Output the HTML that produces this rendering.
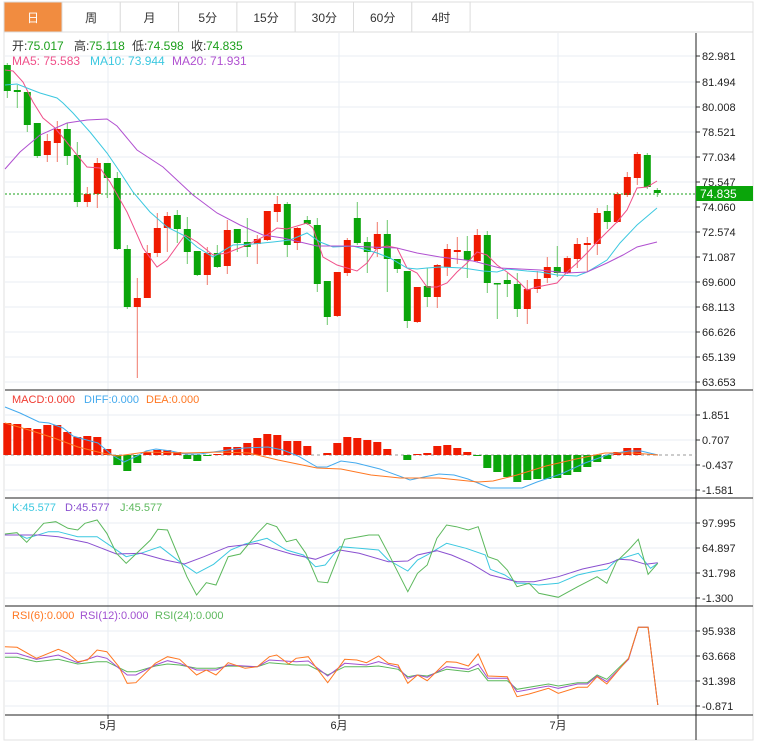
<!DOCTYPE html>
<html><head><meta charset="utf-8">
<style>
html,body{margin:0;padding:0;background:#fff;width:759px;height:747px;overflow:hidden;font-family:"Liberation Sans","Noto Sans CJK SC",sans-serif;}
svg{position:absolute;left:0;top:0}
</style></head>
<body>
<svg id="s" width="759" height="747" xmlns="http://www.w3.org/2000/svg" font-family="Liberation Sans, Noto Sans CJK SC, sans-serif">
</svg>
<script>
var s=document.getElementById('s');var h='';
function L(x1,y1,x2,y2,c,w,d){h+='<line x1="'+x1+'" y1="'+y1+'" x2="'+x2+'" y2="'+y2+'" stroke="'+c+'" stroke-width="'+(w||1)+'"'+(d?' stroke-dasharray="'+d+'"':'')+'/>';}
function R(x,y,w,hh,c,st){h+='<rect x="'+x+'" y="'+y+'" width="'+w+'" height="'+hh+'" fill="'+c+'"'+(st?' stroke="'+st+'"':'')+'/>';}
function T(x,y,t,c,sz,a){h+='<text x="'+x+'" y="'+y+'" fill="'+c+'" font-size="'+(sz||12)+'"'+(a?' text-anchor="'+a+'"':'')+'>'+t+'</text>';}
function P(pts,c,w){h+='<polyline fill="none" stroke="'+c+'" stroke-width="'+(w||1)+'" points="'+pts.map(function(p){return p[0]+','+p[1]}).join(' ')+'"/>';}
function Z(a){var r=[];for(var i=0;i<a.length;i+=2)r.push([(a[i]/2.06).toFixed(1),(380+a[i+1]/3).toFixed(1)]);return r;}
R(4,2,749,738,'#fff','#e2e2e2');
var tabs=['日','周','月','5分','15分','30分','60分','4时'];
for(var i=0;i<8;i++){var x=i==0?4:62+(i-1)*58.3,w=i==0?58:58.3;R(x,2,w,30,i==0?'#f18c40':'#fff','#dcdcdc');T(x+w/2,22,tabs[i],i==0?'#fff':'#333',12,'middle');}
L(471,32,753,32,'#dcdcdc');
var gy=[56,82,107,132,157,182,207,232,257,282,307,332,357,382];
var gl=['82.981','81.494','80.008','78.521','77.034','75.547','74.060','72.574','71.087','69.600','68.113','66.626','65.139','63.653'];
gy.forEach(function(y,k){L(5,y,696,y,'#e8eef3');L(696,y,700,y,'#333');T(702,y+4,gl[k],'#222',11);});
var sub=[[415,440,465,490,['1.851','0.707','-0.437','-1.581']],[523,548,573,598,['97.995','64.897','31.798','-1.300']],[631,656,681,706,['95.938','63.668','31.398','-0.871']]];
sub.forEach(function(g){for(var k=0;k<4;k++){L(5,g[k],696,g[k],'#e8eef3');L(696,g[k],700,g[k],'#333');T(702,g[k]+4,g[4][k],'#222',11);}});
[108,339,558].forEach(function(x){L(x,33,x,715,'#e8eef3');L(x,715,x,719,'#333');});
T(108,729,'5月','#222',11,'middle');T(339,729,'6月','#222',11,'middle');T(558,729,'7月','#222',11,'middle');
L(696,33,696,740,'#222');
[390,498,606,715].forEach(function(y){L(5,y,753,y,'#222');});
var c=[['g',65,91,63,98],['g',90,92,85,108],['g',92,125,92,132],['g',123,156,123,158],['r',141,155,134,162],['r',129,143,121,162],['g',129,156,123,165],['g',155,202,142,207],['r',194,202,187,207],['r',163,194,158,208],['g',163,178,163,198],['g',178,249,172,250],['g',249,307,245,309],['r',298,307,278,378],['r',253,298,245,298],['r',228,253,213,257],['r',216,228,212,252],['g',215,229,210,243],['g',229,252,217,264],['g',251,275,251,276],['r',253,275,247,285],['g',253,267,245,268],['r',230,266,220,274],['g',229,243,229,252],['g',242,247,218,257],['r',239,244,235,264],['r',211,240,211,241],['r',204,212,196,222],['g',204,245,202,257],['r',228,243,227,250],['g',220,224,216,225],['g',225,284,218,292],['g',281,317,281,325],['r',272,316,272,317],['r',240,273,238,276],['g',218,243,202,245],['g',242,252,237,273],['r',234,249,222,257],['g',234,259,220,292],['g',259,269,259,273],['g',271,321,271,328],['r',287,322,287,323],['g',286,297,268,307],['r',265,297,264,308],['r',249,267,244,276],['r',250,252,237,264],['g',251,260,236,278],['r',235,261,229,262],['g',235,283,231,293],['g',283,284,283,319],['g',280,284,273,297],['g',284,309,273,317],['r',289,309,280,324],['r',279,289,271,293],['r',267,278,257,283],['g',267,273,246,277],['r',258,273,256,274],['r',244,259,238,268],['r',243,245,237,272],['r',213,244,208,255],['g',211,222,205,229],['r',194,222,192,223],['r',177,195,172,197],['r',154,178,152,185],['g',155,187,153,189],['g',190,193,188,197]];
c.forEach(function(d,i){var x=7.3+10*i,col=d[0]=='g'?'#0aa50a':'#f01a00',wc=d[0]=='g'?'#6cc86c':'#f07a6a';L(x,d[3],x,d[4],wc);R(x-3.5,d[1],7,Math.max(1.5,d[2]-d[1]),col);});
L(5,194,696,194,'#1aa01a',1,'2,2');R(696,186,57,15,'#0aa50a');T(700,198,'74.835','#fff',12);
P([[5,70],[13,71],[23,82],[33,102],[43,118],[55,128],[65,140],[77,155],[87,167],[100,168],[110,182],[127,212],[143,248],[157,267],[167,260],[185,235],[197,242],[213,255],[227,253],[247,245],[267,235],[277,228],[287,229],[307,223],[313,228],[323,257],[337,265],[357,271],[367,263],[377,248],[387,246],[397,248],[407,268],[417,273],[427,287],[437,287],[447,283],[457,272],[467,263],[477,252],[487,255],[497,265],[507,272],[517,280],[527,290],[537,287],[547,285],[557,283],[567,272],[577,263],[587,253],[597,242],[607,232],[617,222],[627,210],[637,188],[647,187],[657,181]],'#f0508a');
P([[5,85],[17,84],[27,88],[40,93],[57,98],[63,103],[73,113],[90,132],[107,153],[120,172],[133,192],[150,212],[167,227],[183,235],[197,247],[213,257],[233,245],[253,244],[273,242],[290,240],[307,233],[320,242],[333,247],[353,246],[367,250],[377,253],[390,258],[407,268],[417,269],[427,268],[440,267],[463,268],[483,271],[497,272],[507,269],[527,271],[540,272],[557,275],[577,276],[587,272],[607,260],[620,243],[637,225],[657,208]],'#3cc8e0');
P([[5,169],[20,152],[40,135],[67,123],[87,120],[107,119],[117,126],[137,150],[163,167],[193,195],[217,213],[240,225],[263,235],[283,238],[317,246],[347,246],[370,247],[397,248],[417,253],[440,257],[473,261],[500,268],[520,269],[540,270],[567,273],[587,272],[607,263],[623,255],[637,247],[657,242]],'#b050d0');
T(12,50,'开:','#333',12);T(27,50,'75.017','#1a9f1a',12);
T(74,50,'高:','#333',12);T(89,50,'75.118','#1a9f1a',12);
T(132,50,'低:','#333',12);T(147,50,'74.598','#1a9f1a',12);
T(191,50,'收:','#333',12);T(206,50,'74.835','#1a9f1a',12);
T(12,65,'MA5: 75.583','#f0508a',12);T(90,65,'MA10: 73.944','#3cc8e0',12);T(172,65,'MA20: 71.931','#b050d0',12);
L(5,455,696,455,'#999',1,'3,3');
var mb=[423,424,428,429,425,425,432,437,436,437,449,465,471,463,452,450,450,452,459,461,456,454,447,447,443,438,434,435,441,441,446,455,453,443,437,438,440,442,449,455,460,454,453,446,445,448,452,456,468,472,477,482,480,479,479,478,475,472,467,462,459,452,448,448,455,455];
mb.forEach(function(y,i){var x=7.3+10*i-4;if(Math.abs(y-455)<1)return;if(y<455)R(x,y,8,455-y,'#f01a00');else R(x,455,8,y-455,'#0aa50a');});
P([[5,407],[20,413],[39,422],[49,423],[63,428],[73,436],[83,439],[98,443],[112,455],[124,462],[137,456],[146,451],[156,449],[171,451],[185,454],[200,454],[220,451],[244,448],[268,447],[283,450],[298,456],[317,467],[327,467],[341,461],[356,463],[380,469],[410,480],[424,477],[439,474],[454,475],[468,479],[490,488],[522,488],[537,482],[561,474],[585,463],[610,454],[629,451],[641,451],[658,455]],'#44aaee');
P([[5,423],[29,430],[54,438],[78,447],[102,453],[117,456],[146,452],[185,453],[220,452],[249,453],[278,460],[317,468],[341,469],[371,475],[400,478],[439,478],[478,482],[493,481],[517,475],[546,466],[576,459],[605,453],[634,453],[658,455]],'#ff7722');
T(12,403,'MACD:0.000','#f03a30',11);T(84,403,'DIFF:0.000','#44aaee',11);T(146,403,'DEA:0.000','#ff7722',11);
P(Z([10,465,40,465,55,475,100,455,120,455,160,470,200,470,230,500,260,530,290,520,330,500,370,545,405,580,440,553,475,510,505,492,550,475,590,510,625,525,650,560,670,555,700,500,740,505,780,510,800,540,840,573,860,540,880,525,920,490,960,505,1000,525,1010,568,1040,585,1065,610,1080,610,1110,615,1150,610,1190,585,1220,575,1250,568,1270,540,1315,520,1340,565,1355,550]),'#3cc8e0');
P(Z([10,465,80,465,120,470,180,488,240,522,290,520,340,540,380,552,420,530,470,500,530,490,560,505,600,522,650,538,700,510,740,520,800,545,840,543,860,525,900,512,930,525,970,550,1010,585,1065,605,1100,605,1150,590,1200,567,1255,550,1275,538,1300,540,1330,553,1355,548]),'#8a50d0');
P(Z([10,462,35,458,55,487,90,430,115,425,140,445,160,450,175,430,200,420,220,460,240,520,260,550,310,480,325,448,345,450,385,590,405,645,425,608,445,615,470,530,495,522,530,460,550,430,570,440,590,485,610,478,630,520,655,605,675,608,710,478,740,470,760,465,780,465,800,520,840,635,860,580,880,555,900,475,920,435,940,440,965,450,985,440,1005,530,1025,540,1045,570,1065,620,1090,610,1110,640,1150,652,1190,620,1230,590,1250,610,1270,545,1295,510,1315,478,1335,583,1355,550]),'#5cb85c');
T(12,511,'K:45.577','#3cc8e0',11);T(65,511,'D:45.577','#8a50d0',11);T(120,511,'J:45.577','#5cb85c',11);
P(Z([10,832,35,832,75,845,120,838,160,852,200,845,220,845,262,875,280,875,320,858,345,852,370,855,405,865,445,865,470,858,530,860,555,848,610,855,635,855,675,885,710,860,755,860,780,858,820,868,840,890,860,885,880,888,920,868,965,875,985,865,1005,902,1045,902,1065,928,1130,912,1150,918,1190,908,1210,908,1230,885,1250,898,1295,835,1315,742,1335,742,1355,975]),'#5cb85c');
P(Z([10,820,35,820,75,838,120,825,160,848,200,828,220,835,262,885,280,885,320,855,345,842,370,850,405,870,445,870,470,855,530,860,555,840,610,845,635,843,675,888,710,850,755,855,780,845,820,862,840,895,860,885,880,892,920,860,965,868,985,852,1005,895,1045,895,1065,935,1130,918,1150,925,1190,912,1210,912,1230,888,1250,905,1295,838,1315,742,1335,742,1355,975]),'#a050d0');
P(Z([10,800,35,802,75,835,120,808,140,820,160,845,180,840,200,810,220,815,245,860,262,910,280,908,320,850,345,830,370,838,405,885,425,870,445,885,470,848,505,865,530,860,555,830,570,825,595,852,610,835,635,830,650,860,675,908,710,838,735,840,755,848,780,828,800,850,820,855,840,910,860,885,880,902,920,845,940,847,965,858,985,822,1005,888,1045,890,1065,950,1090,942,1130,925,1150,940,1190,922,1210,922,1230,890,1250,912,1295,835,1315,742,1335,742,1355,975]),'#ff7722');
T(12,619,'RSI(6):0.000','#ff7722',11);T(80,619,'RSI(12):0.000','#a050d0',11);T(155,619,'RSI(24):0.000','#5cb85c',11);
s.innerHTML=h;
</script>
</body></html>
